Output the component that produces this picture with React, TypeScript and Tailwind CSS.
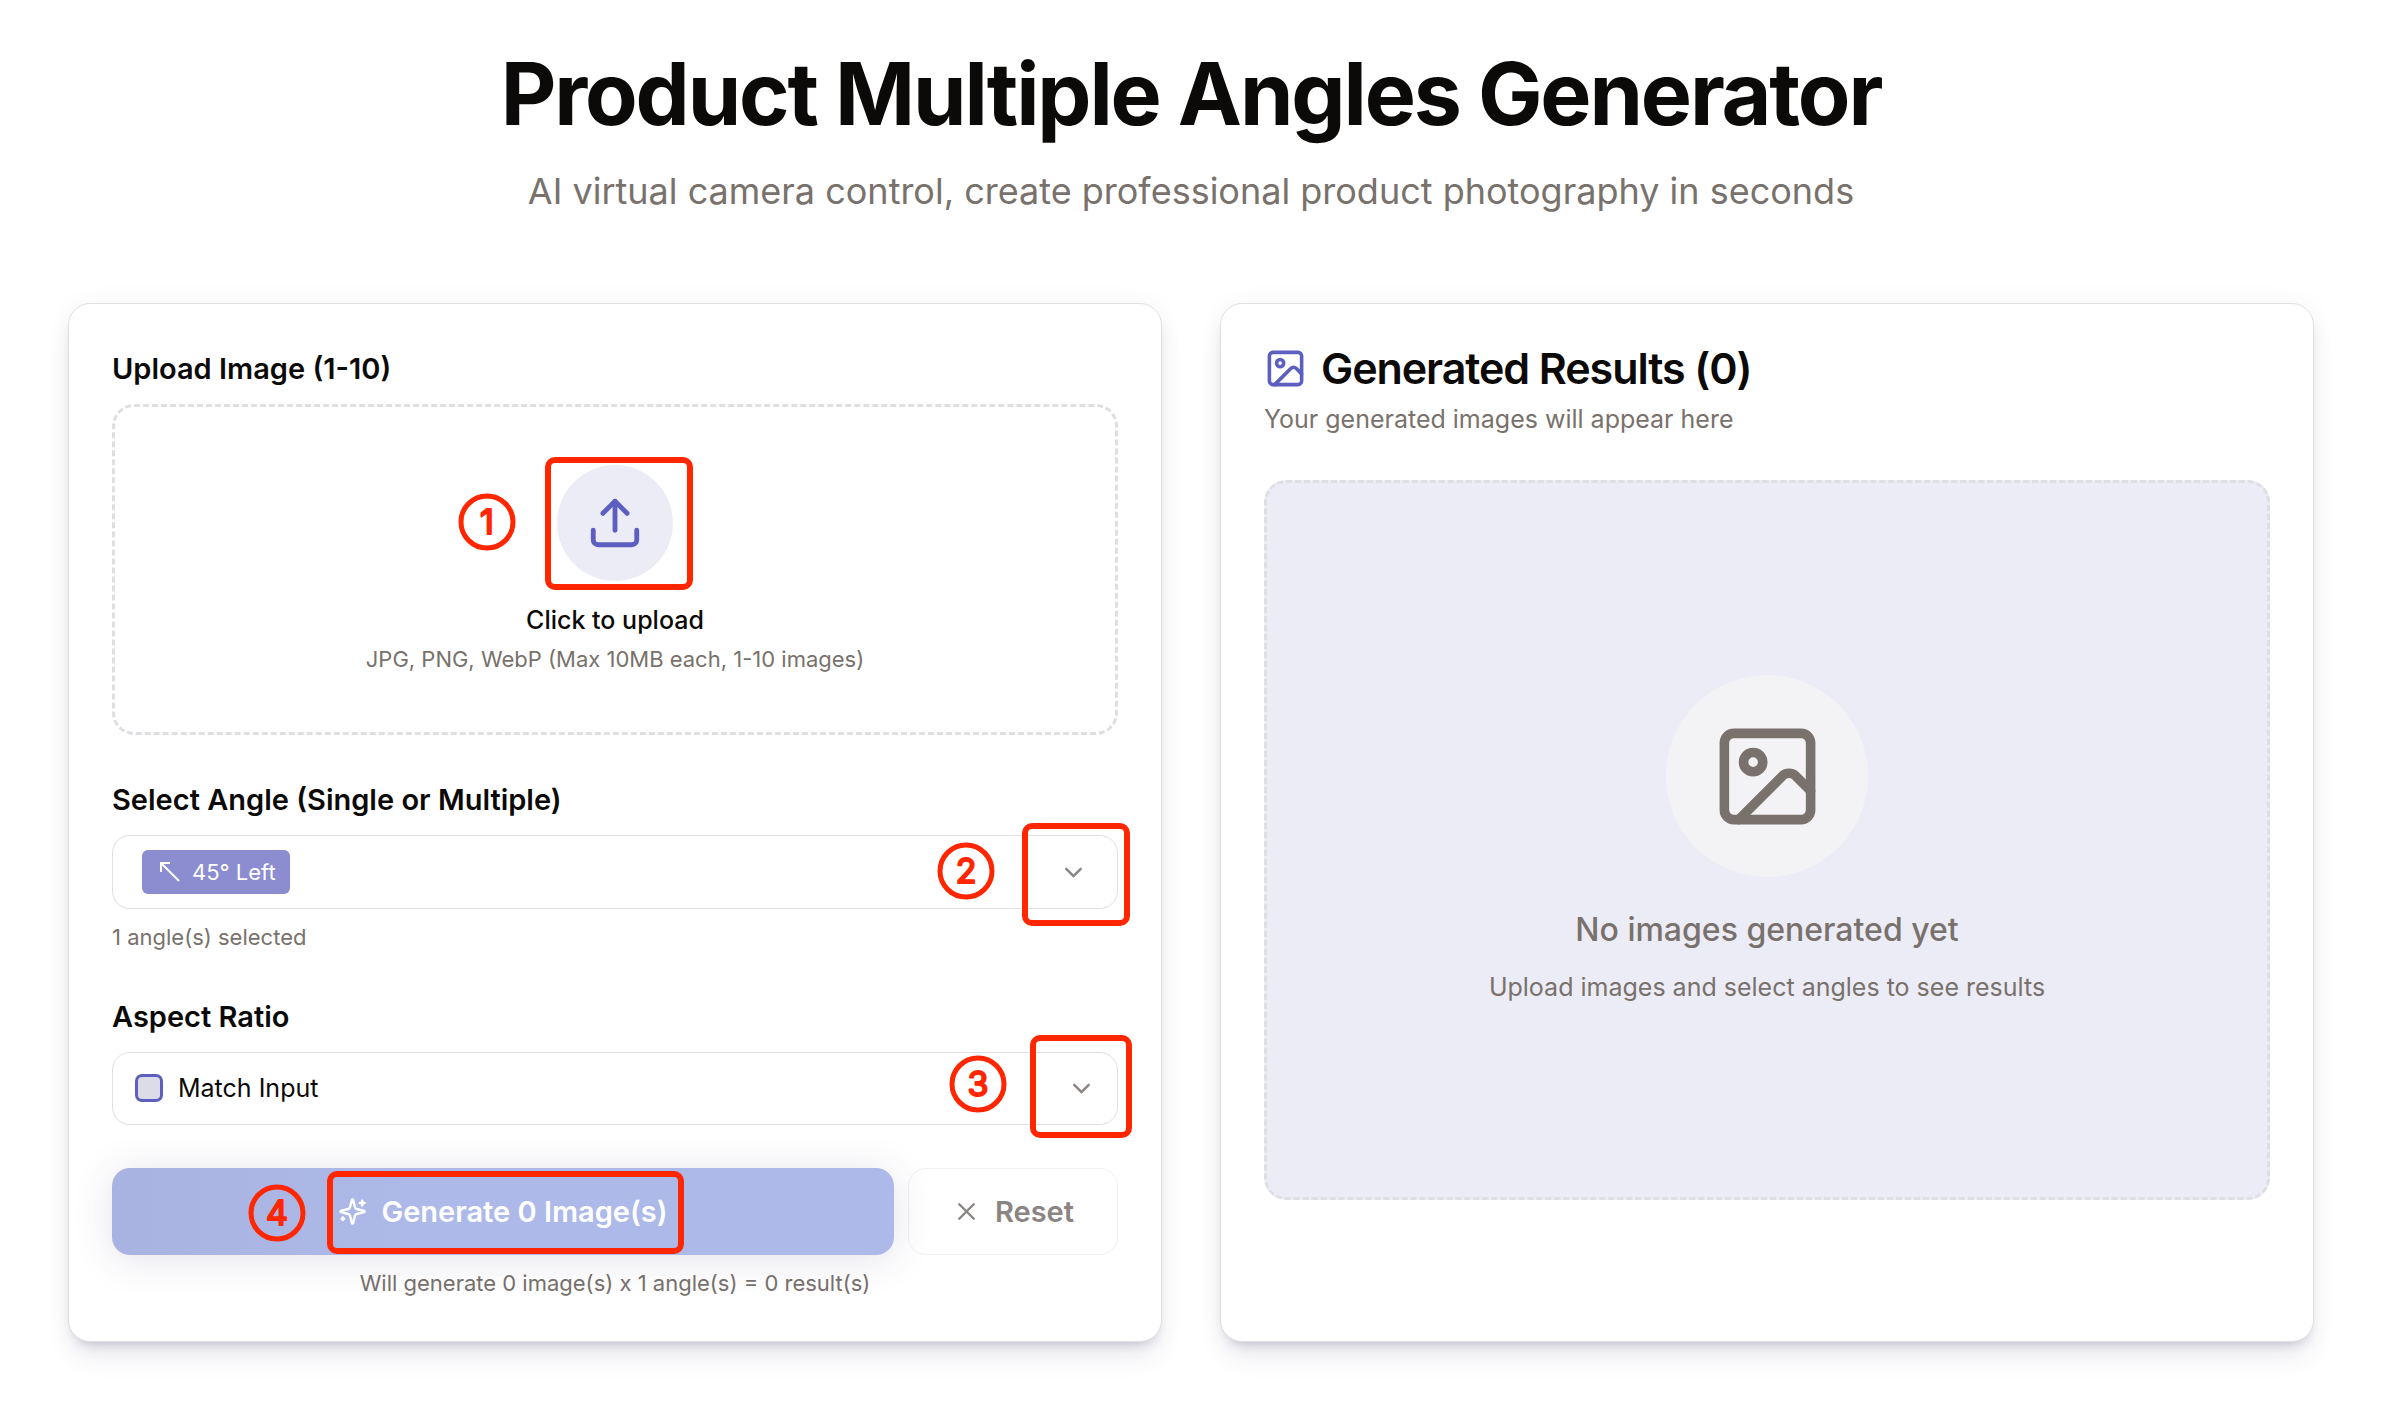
import React, { useState } from 'react';
import { ChevronDown, Image as ImageIcon, Upload, X } from 'lucide-react';

interface StepBadgeProps {
  step: number;
  className?: string;
}

const StepBadge: React.FC<StepBadgeProps> = ({ step, className = '' }) => (
  <svg viewBox="0 0 58 58" className={`pointer-events-none absolute size-[58px] ${className}`}>
    <circle cx="29" cy="29" r="26" fill="none" stroke="#ff2600" strokeWidth="5" />
    <text
      x="29"
      y="41"
      textAnchor="middle"
      fontFamily="Inter, sans-serif"
      fontSize="34"
      fontWeight="400"
      fill="#ff2600"
      stroke="#ff2600"
      strokeWidth="2"
      strokeLinejoin="round"
    >
      {step}
    </text>
  </svg>
);

const SparklesIcon: React.FC<{ className?: string }> = ({ className }) => (
  <svg
    viewBox="0 0 24 24"
    fill="none"
    stroke="currentColor"
    strokeWidth="2"
    strokeLinecap="round"
    strokeLinejoin="round"
    className={className}
  >
    <path d="M9.937 15.5A2 2 0 0 0 8.5 14.063l-6.135-1.582a.5.5 0 0 1 0-.962L8.5 9.936A2 2 0 0 0 9.937 8.5l1.582-6.135a.5.5 0 0 1 .963 0L14.063 8.5A2 2 0 0 0 15.5 9.937l6.135 1.581a.5.5 0 0 1 0 .964L15.5 14.063a2 2 0 0 0-1.437 1.437l-1.582 6.135a.5.5 0 0 1-.963 0z" />
    <path d="M20 3v4M22 5h-4M4 17v2M5 18H3" />
  </svg>
);

const AngleArrow: React.FC = () => (
  <svg viewBox="0 0 20 20" fill="none" stroke="currentColor" strokeWidth="2" className="size-5">
    <path d="M1 10V1h9M1 1l18 18" />
  </svg>
);

const Highlight: React.FC<{ className: string }> = ({ className }) => (
  <span className={`pointer-events-none absolute rounded-[10px] border-6 border-[#ff2600] ${className}`} />
);

const ratios = ['Match Input', '1:1', '4:3', '3:4', '16:9', '9:16'];

const cardClass =
  'rounded-[22px] border border-[#e0dfe4] bg-white p-[43px] shadow-[0_18px_27px_-6px_rgba(60,55,110,0.13),0_7px_11px_-7px_rgba(60,55,90,0.28),0_0_27px_rgba(0,0,0,0.04)]';

const labelClass = 'text-[29px] leading-[43px] font-semibold';

const GeneratorForm: React.FC = () => {
  const [ratio, setRatio] = useState(ratios[0]);
  const [imageCount, setImageCount] = useState(0);

  return (
    <form className={`flex flex-col gap-[43px] ${cardClass}`} onSubmit={(e) => e.preventDefault()}>
      <div className="flex flex-col gap-3.5">
        <label htmlFor="upload" className={labelClass}>
          Upload Image (1-10)
        </label>
        <label
          htmlFor="upload"
          className="relative flex cursor-pointer flex-col items-center rounded-[22px] border-3 border-dashed border-[#dfdee3] py-[58px]"
        >
          <input
            id="upload"
            type="file"
            accept="image/*"
            multiple
            className="sr-only"
            onChange={(e) => setImageCount(e.target.files?.length ?? 0)}
          />
          <span className="relative mb-[21px] flex size-[116px] items-center justify-center rounded-full bg-[#ececf7]">
            <Upload className="size-[58px] text-[#5c5fc0]" />
            <StepBadge step={1} className="top-7 -left-[99px]" />
            <Highlight className="-top-2 -left-3 h-[133px] w-[148px]" />
          </span>
          <span className="mb-[7px] text-[25px] leading-9 font-medium">Click to upload</span>
          <span className="text-[22px] leading-[29px] text-[#78716c]">JPG, PNG, WebP (Max 10MB each, 1-10 images)</span>
        </label>
      </div>

      <div className="flex flex-col gap-3.5">
        <label htmlFor="angle" className={labelClass}>
          Select Angle (Single or Multiple)
        </label>
        <div className="relative">
          <button
            id="angle"
            type="button"
            aria-haspopup="listbox"
            className="flex h-[74px] w-full items-center justify-between rounded-[18px] border border-[#dfdee3] px-[29px]"
          >
            <span className="flex h-11 items-center gap-3 rounded-md bg-[#8c8cd0] pr-3.5 pl-[18px] text-[22px] leading-[29px] text-white">
              <AngleArrow />
              <span>45° Left</span>
            </span>
            <ChevronDown className="size-[29px] text-[#8a8582]" />
          </button>
          <StepBadge step={2} className="top-[7px] right-[123px]" />
          <Highlight className="-top-3 -right-3 h-[103px] w-[108px]" />
        </div>
        <p className="text-[22px] leading-[29px] text-[#78716c]">1 angle(s) selected</p>
      </div>

      <div className="flex flex-col gap-3.5">
        <label htmlFor="ratio" className={labelClass}>
          Aspect Ratio
        </label>
        <div className="relative flex">
          <select
            id="ratio"
            value={ratio}
            onChange={(e) => setRatio(e.target.value)}
            className="h-[73px] w-full appearance-none rounded-[18px] border border-[#dfdee3] bg-white pr-16 pl-[65px] text-[25px]"
          >
            {ratios.map((item) => (
              <option key={item}>{item}</option>
            ))}
          </select>
          <span className="pointer-events-none absolute top-[22px] left-[23px] size-7 rounded-[7px] border-3 border-[#5c5fc0] bg-[#dcdbe8]" />
          <ChevronDown className="pointer-events-none absolute top-[22px] right-[22px] size-[29px] text-[#8a8582]" />
          <StepBadge step={3} className="top-[3px] right-[111px]" />
          <Highlight className="-top-[17px] -right-3.5 h-[103px] w-[102px]" />
        </div>
      </div>

      <div className="flex flex-col gap-3.5">
        <div className="flex gap-3.5 text-[29px] leading-[43px] font-semibold">
          <button
            type="submit"
            className="relative flex h-[87px] flex-1 items-center justify-center gap-3.5 rounded-[18px] bg-linear-to-r from-[#a9b3e2] to-[#adb9e8] to-40% text-white shadow-[0_4px_40px_rgba(60,55,110,0.14)]"
          >
            <SparklesIcon className="size-[29px]" />
            Generate {imageCount} Image(s)
            <StepBadge step={4} className="top-4 left-[136px]" />
            <Highlight className="top-[3px] left-[215px] h-[83px] w-[357px]" />
          </button>
          <button
            type="button"
            onClick={() => setRatio(ratios[0])}
            className="flex h-[87px] items-center gap-3.5 rounded-[18px] border border-[#f0eff2] px-[43px] text-[#8a8582]"
          >
            <X className="size-[29px]" />
            Reset
          </button>
        </div>
        <p className="text-center text-[22px] leading-[29px] text-[#78716c]">
          Will generate {imageCount} image(s) x 1 angle(s) = {imageCount} result(s)
        </p>
      </div>
    </form>
  );
};

const ResultsPanel: React.FC = () => (
  <section className={cardClass}>
    <h2 className="flex items-center gap-3.5 text-[43px] leading-[43px] font-semibold tracking-tight">
      <ImageIcon className="size-[43px] text-[#5c5fc0]" />
      Generated Results (0)
    </h2>
    <p className="mt-[11px] text-[25px] leading-9 text-[#78716c]">Your generated images will appear here</p>
    <div className="mt-[43px] flex min-h-[720px] flex-col items-center justify-center rounded-[22px] border-3 border-dashed border-[#dfdee3] bg-[#ececf7] text-[#78716c]">
      <div className="flex size-[202px] items-center justify-center rounded-full bg-[#f3f3f6]">
        <ImageIcon className="size-[115px]" />
      </div>
      <p className="mt-7 text-[32px] leading-[50px] font-medium">No images generated yet</p>
      <p className="mt-3.5 text-[25px] leading-9">Upload images and select angles to see results</p>
    </div>
  </section>
);

export default function App() {
  return (
    <main className="min-h-screen bg-white px-[68px] pt-[51px] pb-[60px] font-[Inter,sans-serif] text-[#0c0a09]">
      <header className="text-center">
        <h1 className="text-[86px] leading-[86px] font-bold tracking-tight">Product Multiple Angles Generator</h1>
        <p className="mt-[29px] text-[36px] leading-[50px] text-[#78716c]">
          AI virtual camera control, create professional product photography in seconds
        </p>
      </header>
      <div className="mt-[87px] grid grid-cols-2 gap-[58px]">
        <GeneratorForm />
        <ResultsPanel />
      </div>
    </main>
  );
}
